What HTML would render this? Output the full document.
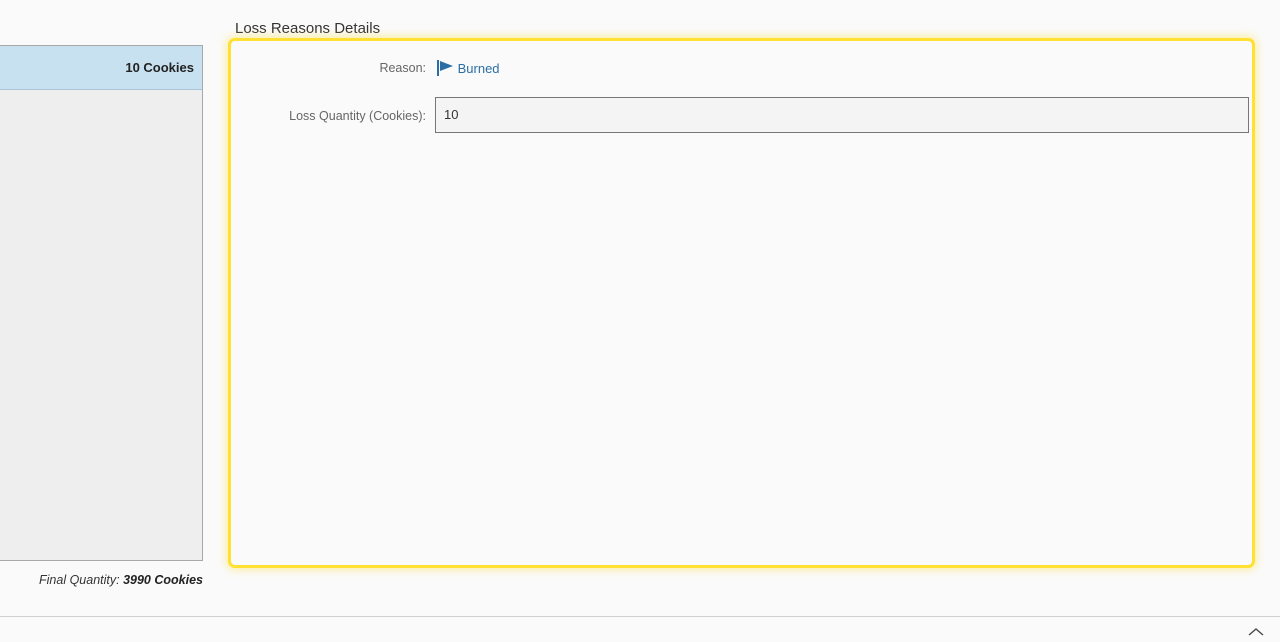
<!DOCTYPE html>
<html><head><meta charset="utf-8"><style>
html,body{margin:0;padding:0;width:1280px;height:642px;background:#fafafa;overflow:hidden;font-family:"Liberation Sans",sans-serif;color:#333}
.left{position:absolute;left:-1px;top:45px;width:202px;height:514px;border:1px solid #a8a8a8;background:#eeeeee}
.row{height:43px;background:#c8e1f0;border-bottom:1px solid #a9c4d6;text-align:right;font-size:13px;line-height:43px;padding-right:8px;color:#222;font-weight:600}
.final{position:absolute;left:0;width:203px;top:573px;text-align:right;font-size:12.5px;font-style:italic;color:#333}
.final b{color:#222}
.title{position:absolute;left:235px;top:20px;font-size:15px;color:#333}
.box{position:absolute;left:228px;top:38px;width:1021px;height:524px;border:3px solid #ffe033;border-radius:7px;background:#fafafa;box-shadow:0 0 8px 2px rgba(255,230,80,.5)}
.lbl{position:absolute;right:826px;font-size:12.5px;color:#666;text-align:right;white-space:nowrap}
.inp{position:absolute;left:204px;top:56px;width:804px;height:34px;border:1px solid #777;background:#f4f4f4;font-size:13px;line-height:34px;padding-left:8px;color:#333;box-sizing:content-box}
.reason{position:absolute;left:206px;top:19px;font-size:13px;color:#2a6ea5}
.foot{position:absolute;left:0;top:616px;width:1280px;border-top:1px solid #cfcfcf}
</style></head><body>
<div class="left"><div class="row">10 Cookies</div></div>
<div class="final">Final Quantity: <b>3990 Cookies</b></div>
<div class="title">Loss Reasons Details</div>
<div class="box">
 <div class="lbl" style="top:20px">Reason:</div>
 <div class="reason"><svg width="17" height="16" viewBox="0 0 17 16" style="vertical-align:-3px"><rect x="0" y="0" width="2" height="16" fill="#2a6ea5"/><path d="M3 1 L16 6 L3 11 Z" fill="#2a6ea5"/></svg> Burned</div>
 <div class="lbl" style="top:68px">Loss Quantity (Cookies):</div>
 <div class="inp">10</div>
</div>
<div class="foot"></div>
<svg style="position:absolute;left:1248px;top:627px" width="16" height="10" viewBox="0 0 16 10"><path d="M1 8 L8 2 L15 8" stroke="#444" stroke-width="1.3" fill="none"/></svg>
</body></html>
